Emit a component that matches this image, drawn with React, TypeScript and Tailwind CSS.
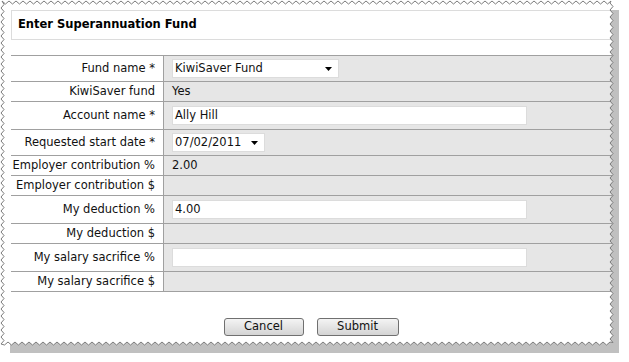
import React from "react";

function zig(
  x0: number,
  y0: number,
  x1: number,
  y1: number,
  amp: number,
  period: number,
  horizontal: boolean
): [number, number][] {
  const pts: [number, number][] = [];
  const len = horizontal ? Math.abs(x1 - x0) : Math.abs(y1 - y0);
  const dir = horizontal ? Math.sign(x1 - x0) : Math.sign(y1 - y0);
  const n = Math.floor(len / (period / 2));
  for (let i = 0; i <= n; i++) {
    const t = (i * period) / 2;
    const off = i % 2 === 0 ? 0 : amp;
    if (horizontal) pts.push([x0 + dir * t, y0 + off]);
    else pts.push([x0 + off, y0 + dir * t]);
  }
  return pts;
}

function paperPoints(): string {
  const top = zig(2, 1, 612, 1, 3, 7, true);
  const right = zig(610, 3, 610, 344, 3, 7, false);
  const bottom = zig(610, 342, 2, 342, 3, 7, true);
  const left = zig(1, 344, 1, 3, 3, 7, false);
  return [...top, ...right, ...bottom, ...left].map((p) => `${p[0]},${p[1]}`).join(" ");
}

const font = { fontFamily: '"DejaVu Sans", Verdana, sans-serif' };

function Arrow() {
  return (
    <svg width="7" height="4" viewBox="0 0 7 4" className="shrink-0">
      <polygon points="0,0 7,0 3.5,4" fill="#000" />
    </svg>
  );
}

function Row({
  label,
  h,
  children,
}: {
  label: string;
  h: string;
  children?: React.ReactNode;
}) {
  return (
    <div className={`flex border-b border-[#a0a0a0] ${h}`}>
      <div className="w-[152px] shrink-0 bg-white flex items-center justify-end pr-[8px] text-[11.5px] text-[#111]">
        {label}
      </div>
      <div className="w-px bg-[#a0a0a0] shrink-0" />
      <div className="flex-1 bg-[#e6e6e6] flex items-center pl-[8px] text-[11.5px] text-[#111]">
        {children}
      </div>
    </div>
  );
}

function TextBox({ value }: { value?: string }) {
  return (
    <div className="w-[355px] h-[19px] bg-white border border-[#dcdcdc] flex items-center px-[2px] text-[11.5px] text-[#111]">
      {value}
    </div>
  );
}

function Select({ value, w }: { value: string; w: string }) {
  return (
    <div className={`${w} h-[19px] bg-white border border-[#dcdcdc] flex items-center justify-between pl-[2px] pr-[6px] text-[11.5px] text-[#111]`}>
      <span>{value}</span>
      <Arrow />
    </div>
  );
}

function Btn({ label, w }: { label: string; w: string }) {
  return (
    <div className={`${w} h-[18px] rounded-[3px] border border-[#707070] bg-gradient-to-b from-[#f4f4f4] to-[#d4d4d4] flex items-center justify-center text-[11.5px] text-[#111]`}>
      {label}
    </div>
  );
}

export default function App() {
  const pts = paperPoints();
  return (
    <div className="relative w-[629px] h-[362px] bg-white overflow-hidden" style={font}>
      <div className="pl-[11px] pt-[10px] w-[616px]">
        <div className="h-[30px] border border-[#dcdcdc] flex items-center pl-[6px] text-[11.5px] font-bold text-black">
          Enter Superannuation Fund
        </div>
        <div className="mt-[15px] border-t border-[#a0a0a0]">
          <Row label="Fund name *" h="h-[26px]">
            <Select value="KiwiSaver Fund" w="w-[167px]" />
          </Row>
          <Row label="KiwiSaver fund" h="h-[20px]">
            Yes
          </Row>
          <Row label="Account name *" h="h-[28px]">
            <TextBox value="Ally Hill" />
          </Row>
          <Row label="Requested start date *" h="h-[26px]">
            <Select value="07/02/2011" w="w-[93px]" />
          </Row>
          <Row label="Employer contribution %" h="h-[20px]">
            2.00
          </Row>
          <Row label="Employer contribution $" h="h-[20px]" />
          <Row label="My deduction %" h="h-[28px]">
            <TextBox value="4.00" />
          </Row>
          <Row label="My deduction $" h="h-[20px]" />
          <Row label="My salary sacrifice %" h="h-[28px]">
            <TextBox />
          </Row>
          <Row label="My salary sacrifice $" h="h-[20px]" />
        </div>
        <div className="mt-[26px] w-[600px] flex justify-center gap-[13px]">
          <Btn label="Cancel" w="w-[80px]" />
          <Btn label="Submit" w="w-[82px]" />
        </div>
      </div>
      <svg className="absolute inset-0 pointer-events-none" width="629" height="362">
        <defs>
          <mask id="outside">
            <rect x="0" y="0" width="629" height="362" fill="white" />
            <polygon points={pts} fill="black" />
          </mask>
        </defs>
        <rect x="0" y="0" width="629" height="362" fill="white" mask="url(#outside)" />
        <rect x="10" y="10" width="609" height="343" fill="#c0c0c0" mask="url(#outside)" />
        <polygon points={pts} fill="none" stroke="#7c7c7c" strokeWidth="1" />
      </svg>
    </div>
  );
}
